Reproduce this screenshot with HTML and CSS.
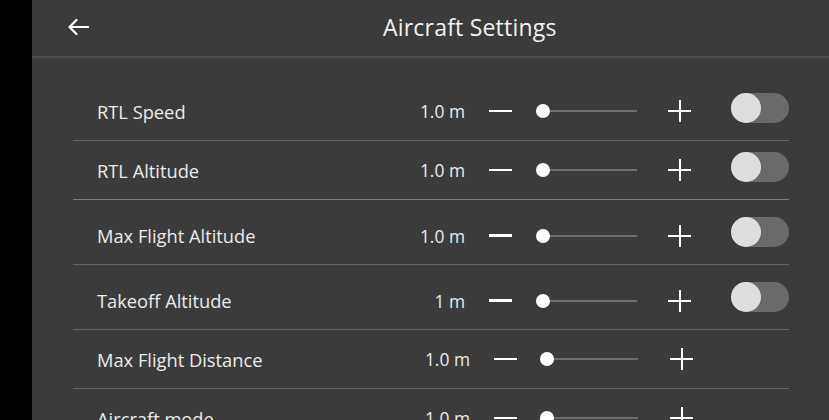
FILE: index.html
```html
<!DOCTYPE html>
<html lang="en">
<head>
<meta charset="utf-8">
<title>Aircraft Settings</title>
<link rel="stylesheet" href="styles.css">
</head>
<body>
<div class="app">
  <div class="rail"></div>
  <main class="main">
    <header class="header">
      <svg class="back" width="22" height="18" viewBox="0 0 22 18" aria-hidden="true">
        <path d="M21 9H2.5M9.5 2L2.5 9l7 7" fill="none" stroke="#fff" stroke-width="2.2" stroke-linecap="round" stroke-linejoin="round"/>
      </svg>
      <h1 class="title">Aircraft Settings</h1>
    </header>
    <section class="list">
      <div class="row">
        <span class="label">RTL Speed</span>
        <span class="value">1.0 m</span>
        <span class="minus"></span>
        <span class="slider"><span class="knob"></span></span>
        <span class="plus"></span>
        <span class="toggle"><span class="toggle-knob"></span></span>
      </div>
      <div class="row row-strong">
        <span class="label">RTL Altitude</span>
        <span class="value">1.0 m</span>
        <span class="minus"></span>
        <span class="slider"><span class="knob"></span></span>
        <span class="plus"></span>
        <span class="toggle"><span class="toggle-knob"></span></span>
      </div>
      <div class="row row-tall">
        <span class="label">Max Flight Altitude</span>
        <span class="value">1.0 m</span>
        <span class="minus"></span>
        <span class="slider"><span class="knob"></span></span>
        <span class="plus"></span>
        <span class="toggle"><span class="toggle-knob"></span></span>
      </div>
      <div class="row row-tall">
        <span class="label">Takeoff Altitude</span>
        <span class="value">1 m</span>
        <span class="minus"></span>
        <span class="slider"><span class="knob"></span></span>
        <span class="plus"></span>
        <span class="toggle"><span class="toggle-knob"></span></span>
      </div>
      <div class="row row-plain">
        <span class="label">Max Flight Distance</span>
        <span class="value">1.0 m</span>
        <span class="minus"></span>
        <span class="slider"><span class="knob"></span></span>
        <span class="plus"></span>
        <span class="toggle-space"></span>
      </div>
      <div class="row row-plain">
        <span class="label">Aircraft mode</span>
        <span class="value">1.0 m</span>
        <span class="minus"></span>
        <span class="slider"><span class="knob"></span></span>
        <span class="plus"></span>
        <span class="toggle-space"></span>
      </div>
    </section>
  </main>
</div>
</body>
</html>
```

FILE: styles.css
```css
* { box-sizing: border-box; }
html, body {
  margin: 0;
  height: 100%;
  background: #3b3b3b;
  overflow: hidden;
}
body {
  font-family: "Open Sans", "Noto Sans", sans-serif;
  color: #ececec;
}
.app {
  display: flex;
  height: 420px;
}
.rail {
  width: 32px;
  flex: none;
  background: #000;
}
.main {
  flex: 1;
  background: #3b3b3b;
  overflow: hidden;
}
.header {
  height: 58px;
  display: flex;
  align-items: center;
  padding-left: 35px;
  padding-bottom: 2px;
  border-bottom: 2px solid #3f5243;
}
.back { flex: none; display: block; }
.title {
  margin: 0 0 0 294px;
  font-size: 23px;
  font-weight: 500;
  color: #f2f2f2;
  letter-spacing: 0.2px;
}
.list {
  padding: 24px 40px 0 41px;
}
.row {
  height: 59px;
  display: flex;
  align-items: center;
  border-bottom: 1px solid #656565;
}
.row-strong {
  border-bottom-color: #7c7c7c;
}
.row-tall {
  height: 65px;
  padding-top: 7px;
}
.label {
  flex: 1;
  padding-left: 24px;
  font-size: 18.3px;
  color: #ececec;
}
.value {
  width: 80px;
  text-align: right;
  font-size: 17.4px;
  color: #ececec;
}
.minus {
  width: 23px;
  height: 2.5px;
  background: #fff;
  margin-left: 24px;
}
.slider {
  position: relative;
  width: 101px;
  height: 2px;
  margin-left: 24px;
  background: linear-gradient(#6d6d6d, #6d6d6d) no-repeat 7px 0 / 100% 2px;
}
.knob {
  position: absolute;
  left: 0;
  top: -6px;
  width: 14px;
  height: 14px;
  border-radius: 50%;
  background: #fff;
}
.plus {
  position: relative;
  width: 23px;
  height: 22px;
  margin-left: 31px;
}
.plus::before, .plus::after {
  content: "";
  position: absolute;
  background: #fff;
}
.plus::before { left: 0; right: 0; top: 10px; height: 2px; }
.plus::after { top: 0; bottom: 0; left: 10.5px; width: 2px; }
.toggle {
  position: relative;
  width: 58px;
  height: 30px;
  margin-left: 40px;
  margin-bottom: 7px;
  border-radius: 15px;
  background: #6a6a6a;
}
.toggle-knob {
  position: absolute;
  left: 0;
  top: 0;
  width: 30px;
  height: 30px;
  border-radius: 50%;
  background: #dedede;
}
.toggle-space {
  width: 58px;
  margin-left: 38px;
}
.row-plain .value { width: 84px; }
.row-plain .slider { margin-left: 23px; width: 98px; }
.row-plain .minus { margin-left: 24px; }
.row-plain .plus { margin-left: 32px; }
```
